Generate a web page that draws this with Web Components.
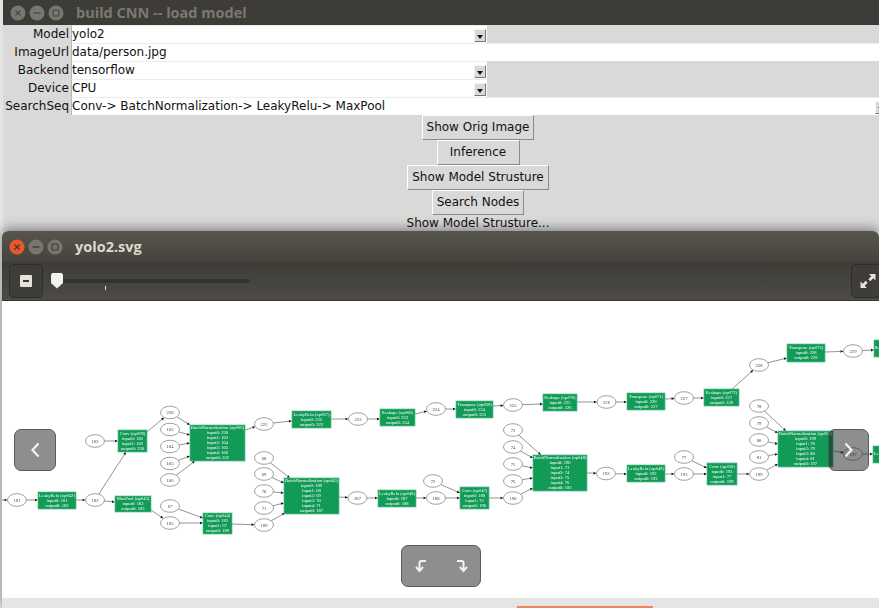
<!DOCTYPE html>
<html>
<head>
<meta charset="utf-8">
<title>build CNN</title>
<style>
    html, body { margin: 0; height: 100%; overflow: hidden; background: #e4e4e4; }
</style>
</head>
<body>
<cnn-desktop>
    <tk-window title="build CNN -- load model">
        <tk-row label="Model"><tk-field value="yolo2" combo width="416"></tk-field></tk-row>
        <tk-row label="ImageUrl"><tk-field value="data/person.jpg"></tk-field></tk-row>
        <tk-row label="Backend"><tk-field value="tensorflow" combo width="416"></tk-field></tk-row>
        <tk-row label="Device"><tk-field value="CPU" combo width="416"></tk-field></tk-row>
        <tk-row label="SearchSeq"><tk-field value="Conv-&gt; BatchNormalization-&gt; LeakyRelu-&gt; MaxPool" combo width="817"></tk-field></tk-row>
        <tk-button slot="actions">Show Orig Image</tk-button>
        <tk-button slot="actions">Inference</tk-button>
        <tk-button slot="actions">Show Model Strusture</tk-button>
        <tk-button slot="actions">Search Nodes</tk-button>
        <span slot="actions" style="height:16px;line-height:16px">Show Model Strusture...</span>
    </tk-window>
    <viewer-window title="yolo2.svg"></viewer-window>
</cnn-desktop>

<script>
class CnnDesktop extends HTMLElement {
    constructor() {
        super();
        this.shadowDOM = this.attachShadow({mode: "open"});
        this.shadowDOM.innerHTML = `
            <style>
                :host {
                    display: block;
                    position: relative;
                    width: 879px;
                    height: 608px;
                    overflow: hidden;
                    background: #e4e4e4;
                }
            </style>
            <slot></slot>`;
    }
}

class WinButtons extends HTMLElement {
    constructor() {
        super();
        this.shadowDOM = this.attachShadow({mode: "open"});
    }

    connectedCallback() {
        const active = this.hasAttribute("active");
        const close = active ? "#e9572b" : "#77766f";
        const rest = active ? "#77766e" : "#77766f";
        const mark = active ? "#3b3a35" : "#4a4943";
        this.shadowDOM.innerHTML = `
            <style>
                :host { display: flex; gap: 3px; }
                svg { display: block; }
            </style>
            <svg width="16" height="16" viewBox="0 0 16 16">
                <circle cx="8" cy="8" r="7.5" fill="${close}"/>
                <path d="M5.5 5.5l5 5M10.5 5.5l-5 5" stroke="${mark}" stroke-width="1.2"/>
            </svg>
            <svg width="16" height="16" viewBox="0 0 16 16">
                <circle cx="8" cy="8" r="7.5" fill="${rest}"/>
                <path d="M4.5 8h7" stroke="${mark}" stroke-width="1.4"/>
            </svg>
            <svg width="16" height="16" viewBox="0 0 16 16">
                <circle cx="8" cy="8" r="7.5" fill="${rest}"/>
                <rect x="5" y="5" width="6" height="6" rx="1" fill="none" stroke="${mark}" stroke-width="1.2"/>
            </svg>`;
    }
}

class TkWindow extends HTMLElement {
    constructor() {
        super();
        this.shadowDOM = this.attachShadow({mode: "open"});
    }

    connectedCallback() {
        this.shadowDOM.innerHTML = `
            <style>
                :host {
                    display: block;
                    position: absolute;
                    left: 3px;
                    top: 0;
                    width: 950px;
                    background: #d9d9d9;
                    font: 12px "DejaVu Sans", sans-serif;
                    color: #111;
                }
                .title {
                    display: flex;
                    align-items: center;
                    gap: 12px;
                    height: 25px;
                    padding-left: 7px;
                    background: #3d3c38;
                    color: #7b7970;
                    font: bold 14.5px "Open Sans", sans-serif;
                    white-space: nowrap;
                }
                .actions {
                    display: flex;
                    flex-direction: column;
                    align-items: center;
                    height: 116px;
                }
            </style>
            <div class="title"><win-buttons></win-buttons><span>${this.getAttribute("title")}</span></div>
            <slot></slot>
            <div class="actions"><slot name="actions"></slot></div>`;
    }
}

class TkRow extends HTMLElement {
    constructor() {
        super();
        this.shadowDOM = this.attachShadow({mode: "open"});
    }

    connectedCallback() {
        this.shadowDOM.innerHTML = `
            <style>
                :host {
                    display: flex;
                    height: 18px;
                }
                label {
                    box-sizing: border-box;
                    flex: none;
                    width: 68px;
                    padding-right: 2px;
                    text-align: right;
                    line-height: 18px;
                    white-space: nowrap;
                }
            </style>
            <label>${this.getAttribute("label")}</label>
            <slot></slot>`;
    }
}

class TkField extends HTMLElement {
    constructor() {
        super();
        this.shadowDOM = this.attachShadow({mode: "open"});
    }

    connectedCallback() {
        const width = this.getAttribute("width");
        this.shadowDOM.innerHTML = `
            <style>
                :host {
                    display: flex;
                    box-sizing: border-box;
                    position: relative;
                    flex: ${width ? "none" : "1"};
                    width: ${width ? width + "px" : "auto"};
                    height: 18px;
                    background: #fff;
                    border-top: 1px solid #ececec;
                    border-left: 1px solid #b5b5b5;
                    line-height: 16px;
                    white-space: nowrap;
                }
                .arrow {
                    position: absolute;
                    right: 1px;
                    top: 3px;
                    box-sizing: border-box;
                    width: 12px;
                    height: 13px;
                    background: #d9d9d9;
                    border: 1px solid;
                    border-color: #f4f4f4 #777 #777 #f4f4f4;
                }
                .arrow::after {
                    content: "";
                    position: absolute;
                    left: 1.5px;
                    top: 5px;
                    border: 3.5px solid transparent;
                    border-top: 4px solid #111;
                    border-bottom: 0;
                }
            </style>
            <span>${this.getAttribute("value").replace(/>/g, "&gt;")}</span>
            ${this.hasAttribute("combo") ? '<div class="arrow"></div>' : ""}`;
    }
}

class TkButton extends HTMLElement {
    constructor() {
        super();
        this.shadowDOM = this.attachShadow({mode: "open"});
        this.shadowDOM.innerHTML = `
            <style>
                :host {
                    display: block;
                    box-sizing: border-box;
                    height: 25px;
                    min-width: 83px;
                    padding: 0 4px;
                    background: #d9d9d9;
                    border: 1px solid;
                    border-color: #fff #8a8a8a #8a8a8a #fff;
                    line-height: 22px;
                    text-align: center;
                    white-space: nowrap;
                }
            </style>
            <slot></slot>`;
    }
}

class NavButton extends HTMLElement {
    constructor() {
        super();
        this.shadowDOM = this.attachShadow({mode: "open"});
        this.shadowDOM.innerHTML = `
            <style>
                :host {
                    display: flex;
                    align-items: center;
                    justify-content: center;
                    box-sizing: border-box;
                    position: absolute;
                    background: rgba(22, 24, 24, 0.49);
                    border: 1px solid #5a5c5c;
                    border-radius: 7px;
                }
            </style>
            <slot></slot>`;
    }
}

// every node and edge is in page coordinates, the svg viewBox starts at the viewer corner
const NODES = [
    [17, 500, "181"], [95, 500, "182"], [95, 441, "102"], [170, 412.5, "220"], [170, 429.5, "103"],
    [170, 446.5, "104"], [170, 463.5, "105"], [170, 480, "106"], [170, 506, "67"], [170, 523, "183"],
    [264, 424, "222"], [358, 419, "223"], [436, 409, "224"], [513, 405, "225"], [606.5, 402, "226"],
    [684, 398, "227"], [759, 365, "228"], [853, 351, "229"], [264, 458, "68"], [264, 474, "69"],
    [264, 491, "70"], [264, 508, "71"], [264, 525, "189"], [357.5, 498, "187"], [436, 498, "188"],
    [433, 481, "72"], [513, 498, "190"], [513, 430, "73"], [513, 447, "74"], [513, 464, "75"],
    [513, 481, "76"], [606, 473.5, "192"], [684, 474, "193"], [684, 457, "77"], [759, 474, "199"],
    [759, 406, "78"], [759, 423, "79"], [759, 440, "80"], [759, 457, "81"], [853, 454, "197"]
];

const BOXES = [
    [38, 492, 38, 17, "LeakyRelu (op#42)", "input0: 181", "output0: 182"],
    [118, 430, 29, 22, "Conv (op#69)", "input0: 182", "input1: 102", "output0: 220"],
    [115, 496, 36, 16, "MaxPool (op#43)", "input0: 182", "output0: 183"],
    [190, 425, 55, 36, "BatchNormalization (op#66)", "input0: 220", "input1: 103", "input2: 104", "input3: 105", "input4: 106", "output0: 222"],
    [203, 513, 29, 21, "Conv (op#44)", "input0: 183", "input1: 67", "output0: 189"],
    [292, 411, 39, 17, "LeakyRelu (op#67)", "input0: 222", "output0: 223"],
    [380, 409, 35, 17, "Reshape (op#68)", "input0: 223", "output0: 224"],
    [456, 401, 37, 17, "Transpose (op#69)", "input0: 224", "output0: 225"],
    [543, 394, 34, 17, "Reshape (op#70)", "input0: 225", "output0: 226"],
    [627, 393, 38, 17, "Transpose (op#71)", "input0: 226", "output0: 227"],
    [704, 389, 35, 17, "Reshape (op#72)", "input0: 227", "output0: 228"],
    [787, 344, 38, 18, "Transpose (op#73)", "input0: 228", "output0: 229"],
    [284, 478, 55, 36, "BatchNormalization (op#45)", "input0: 189", "input1: 68", "input2: 69", "input3: 70", "input4: 71", "output0: 187"],
    [378, 490, 38, 17, "LeakyRelu (op#46)", "input0: 187", "output0: 188"],
    [460, 487, 29, 22, "Conv (op#47)", "input0: 188", "input1: 72", "output0: 190"],
    [533, 455, 54, 36, "BatchNormalization (op#48)", "input0: 190", "input1: 73", "input2: 74", "input3: 75", "input4: 76", "output0: 192"],
    [627, 465, 38, 17, "LeakyRelu (op#49)", "input0: 192", "output0: 193"],
    [707, 463, 30, 22, "Conv (op#50)", "input0: 193", "input1: 77", "output0: 199"],
    [778, 431, 55, 36, "BatchNormalization (op#51)", "input0: 199", "input1: 78", "input2: 79", "input3: 80", "input4: 81", "output0: 197"],
    [874, 340, 20, 17],
    [873, 446, 20, 17]
];

const EDGES = [
    [2,500,5,500],[30,500,38,500],[76,500,83,500],[100,494,126,452],[103,441,118,441],[107,502,115,502],
    [147,432,163,418],[178,417,190,425],[182,431,190,435],[182,446,190,443],[182,462,190,456],[178,476,195,461],
    [151,510,163,519],[182,510,203,518],[183,523,203,523],[232,524,251,525],[245,430,252,427],[276,422,292,421],
    [331,419,345,419],[371,419,380,419],[415,414,423,411],[449,409,456,409],[493,406,500,405],[526,404,543,404],
    [577,402,594,402],[619,402,627,402],[665,399,672,398],[696,398,704,398],[732,389,754,370],[768,363,787,358],
    [825,352,841,351],[865,351,874,350],[270,463,290,478],[276,477,284,483],[277,491,284,493],[276,506,284,503],
    [274,519,285,513],[339,497,345,498],[370,498,378,498],[416,498,424,498],[448,498,460,498],[442,485,460,493],
    [489,498,501,498],[520,436,541,455],[525,450,533,458],[526,464,533,468],[525,480,533,478],[521,494,533,488],
    [587,473,594,473],[618,474,627,474],[665,474,672,474],[696,474,707,474],[693,462,707,468],[737,474,747,474],
    [765,411,786,431],[771,426,778,433],[772,441,778,444],[771,456,778,454],[768,469,778,464],[833,451,841,453],
    [865,454,873,454]
];

const RX = 9.5, RY = 6.3;

// an edge end that lands near an ellipse is moved onto its outline
function snap(x, y, ox, oy) {
    const n = NODES.find(n => Math.abs(n[0] - x) <= 14 && Math.abs(n[1] - y) <= 9);
    if (!n) return [x, y];
    const dx = ox - n[0], dy = oy - n[1];
    const k = 1 / Math.hypot(dx / RX, dy / RY);
    return [n[0] + dx * k, n[1] + dy * k];
}

class GraphView extends HTMLElement {
    constructor() {
        super();
        this.shadowDOM = this.attachShadow({mode: "open"});
        this.render();
    }

    render() {
        const edges = EDGES.map(e => {
            const [x1, y1] = snap(e[0], e[1], e[2], e[3]);
            const [x2, y2] = snap(e[2], e[3], e[0], e[1]);
            const len = Math.hypot(x2 - x1, y2 - y1);
            const ux = (x2 - x1) / len, uy = (y2 - y1) / len;
            const bx = x2 - ux * 3, by = y2 - uy * 3;
            return `<line x1="${x1}" y1="${y1}" x2="${bx}" y2="${by}" stroke="#666" stroke-width="0.7"/>
                <polygon points="${x2},${y2} ${bx - uy * 1.3},${by + ux * 1.3} ${bx + uy * 1.3},${by - ux * 1.3}" fill="#111"/>`;
        }).join("");
        const nodes = NODES.map(n => `
            <ellipse cx="${n[0]}" cy="${n[1]}" rx="${RX}" ry="${RY}" fill="#fff" stroke="#777" stroke-width="0.7"/>
            <text x="${n[0]}" y="${n[1] + 1.5}" text-anchor="middle" fill="#3b3470">${n[2]}</text>`).join("");
        const boxes = BOXES.map(b => {
            const [x, y, w, h, ...lines] = b;
            const step = 5;
            const top = y + (h - step * lines.length) / 2 + 3.8;
            const label = lines.map((t, i) => `<text x="${x + w / 2}" y="${top + i * step}" text-anchor="middle" fill="#fff">${t}</text>`).join("");
            return `<rect x="${x}" y="${y}" width="${w}" height="${h}" fill="#129a57" stroke="#52c08c" stroke-width="0.7"/>${label}`;
        }).join("");
        this.shadowDOM.innerHTML = `
            <style>
                :host {
                    display: block;
                    width: 877px;
                    height: 297px;
                    background: #fff;
                }
                svg {
                    display: block;
                    filter: blur(0.45px);
                    font: 4.6px "Liberation Serif", serif;
                }
            </style>
            <svg width="877" height="297" viewBox="2 301 877 297">${edges}${nodes}${boxes}
                <text x="874.5" y="349" fill="#fff">Re</text>
                <text x="874" y="455" fill="#fff">Le</text>
            </svg>`;
    }
}

class ViewerWindow extends HTMLElement {
    constructor() {
        super();
        this.shadowDOM = this.attachShadow({mode: "open"});
    }

    connectedCallback() {
        this.shadowDOM.innerHTML = `
            <style>
                :host {
                    display: block;
                    position: absolute;
                    left: 2px;
                    top: 231px;
                    width: 877px;
                    height: 377px;
                    background: #fff;
                    border-radius: 6px 6px 0 0;
                    box-shadow: 0 -2px 12px rgba(0, 0, 0, 0.45);
                }
                .title {
                    display: flex;
                    align-items: center;
                    gap: 12px;
                    box-sizing: border-box;
                    height: 31px;
                    padding-left: 7px;
                    background: linear-gradient(#57554c, #45433d);
                    border-radius: 6px 6px 0 0;
                    color: #dcd9cf;
                    font: bold 14.5px "Open Sans", sans-serif;
                }
                .tools {
                    display: flex;
                    align-items: center;
                    box-sizing: border-box;
                    height: 39px;
                    padding-left: 7px;
                    background: linear-gradient(#3d3c37, #4d4b44);
                    border-bottom: 1px solid #37362f;
                }
                .tool {
                    display: flex;
                    align-items: center;
                    justify-content: center;
                    box-sizing: border-box;
                    flex: none;
                    width: 34px;
                    height: 34px;
                    border: 1px solid #2e2d29;
                    border-radius: 5px;
                    background: #3e3d38;
                }
                .minus {
                    display: flex;
                    align-items: center;
                    justify-content: center;
                    width: 12px;
                    height: 12px;
                    background: #e6e2d9;
                    border-radius: 1px;
                }
                .minus::after {
                    content: "";
                    width: 6px;
                    height: 2px;
                    background: #3b3a35;
                }
                .slider {
                    position: relative;
                    flex: none;
                    width: 200px;
                    height: 4px;
                    margin: -1px 0 0 7px;
                    background: #33322e;
                    border-radius: 2px;
                }
                .handle {
                    position: absolute;
                    left: 1px;
                    top: -6px;
                    width: 12px;
                    height: 16px;
                    background: #f4f2ee;
                    clip-path: polygon(15% 0, 85% 0, 100% 12%, 100% 65%, 50% 100%, 0 65%, 0 12%);
                }
                .tick {
                    position: absolute;
                    left: 55px;
                    top: 7px;
                    width: 1px;
                    height: 4px;
                    background: #ddd;
                }
                .full {
                    margin-left: auto;
                    margin-right: -6px;
                    width: 34px;
                }
                .canvas { position: relative; }
                .bottom {
                    position: absolute;
                    left: 0;
                    right: 0;
                    top: 297px;
                    height: 10px;
                    background: #e5e5e5;
                }
                .bottom div {
                    width: 136px;
                    height: 2px;
                    margin: 8px 0 0 515px;
                    background: #f0845f;
                }
                nav-button svg { display: block; }
            </style>
            <div class="title"><win-buttons active></win-buttons><span>${this.getAttribute("title")}</span></div>
            <div class="tools">
                <div class="tool"><div class="minus"></div></div>
                <div class="slider"><div class="handle"></div><div class="tick"></div></div>
                <div class="tool full">
                    <svg width="18" height="18" viewBox="0 0 18 18" fill="#e6e2d9">
                        <path d="M10 2h6.500v6.500l-2.200-2.200-3 3-2-2 3-3z"/>
                        <path d="M8 16H1.500V9.500l2.200 2.200 3-3 2 2-3 3z"/>
                    </svg>
                </div>
            </div>
            <div class="canvas">
                <graph-view></graph-view>
                <nav-button style="left:12px;top:128px;width:42px;height:42px">
                    <svg width="14" height="20" viewBox="0 0 14 20"><path d="M10.500 3.500L4.500 10l6 6.500" fill="none" stroke="#f2f2f2" stroke-width="2.200"/></svg>
                </nav-button>
                <nav-button style="left:826px;top:128px;width:41px;height:42px">
                    <svg width="14" height="20" viewBox="0 0 14 20"><path d="M3.500 3.500l6 6.500-6 6.500" fill="none" stroke="#f2f2f2" stroke-width="2.200"/></svg>
                </nav-button>
                <nav-button style="left:399px;top:244px;width:80px;height:42px;gap:29px">
                    <svg width="12" height="14" viewBox="0 0 12 14" fill="none" stroke="#f2f2f2" stroke-width="2"><path d="M11 2H6.500Q4.500 2 4.500 4v7"/><path d="M1 8l3.500 4L8 8"/></svg>
                    <svg width="12" height="14" viewBox="0 0 12 14" fill="none" stroke="#f2f2f2" stroke-width="2"><path d="M1 2h4.500q2 0 2 2v7"/><path d="M4 8l3.500 4L11 8"/></svg>
                </nav-button>
                <div class="bottom"><div></div></div>
            </div>`;
    }
}

customElements.define("cnn-desktop", CnnDesktop);
customElements.define("win-buttons", WinButtons);
customElements.define("tk-window", TkWindow);
customElements.define("tk-row", TkRow);
customElements.define("tk-field", TkField);
customElements.define("tk-button", TkButton);
customElements.define("nav-button", NavButton);
customElements.define("graph-view", GraphView);
customElements.define("viewer-window", ViewerWindow);
</script>
</body>
</html>
